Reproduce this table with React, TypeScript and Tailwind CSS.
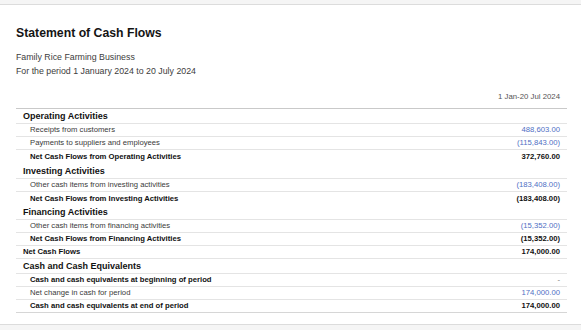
type Line = {
  kind: "section" | "item" | "subtotal" | "total";
  label: string;
  value?: string;
  border?: boolean;
  tall?: boolean;
};

const rows: Line[] = [
  { kind: "section", label: "Operating Activities" },
  { kind: "item", label: "Receipts from customers", value: "488,603.00" },
  { kind: "item", label: "Payments to suppliers and employees", value: "(115,843.00)" },
  { kind: "subtotal", label: "Net Cash Flows from Operating Activities", value: "372,760.00", border: false, tall: true },
  { kind: "section", label: "Investing Activities" },
  { kind: "item", label: "Other cash items from investing activities", value: "(183,408.00)" },
  { kind: "subtotal", label: "Net Cash Flows from Investing Activities", value: "(183,408.00)", border: false },
  { kind: "section", label: "Financing Activities" },
  { kind: "item", label: "Other cash items from financing activities", value: "(15,352.00)" },
  { kind: "subtotal", label: "Net Cash Flows from Financing Activities", value: "(15,352.00)" },
  { kind: "total", label: "Net Cash Flows", value: "174,000.00" },
  { kind: "section", label: "Cash and Cash Equivalents" },
  { kind: "subtotal", label: "Cash and cash equivalents at beginning of period", value: "-" },
  { kind: "item", label: "Net change in cash for period", value: "174,000.00" },
  { kind: "subtotal", label: "Cash and cash equivalents at end of period", value: "174,000.00" },
];

function Row({ row, last }: { row: Line; last: boolean }) {
  const border = row.border !== false;
  const base = `flex items-center justify-between pr-[7px] ${
    border ? (last ? "border-b border-[#d6d6d6]" : "border-b border-[#e4e4e4]") : ""
  }`;

  if (row.kind === "section") {
    return (
      <div className={`${base} h-[15px] pl-[7px]`}>
        <span className="text-[9px] font-bold text-[#111]">{row.label}</span>
      </div>
    );
  }

  const bold = row.kind !== "item";
  return (
    <div className={`${base} ${row.tall ? "h-[14px]" : "h-[13px]"} ${row.kind === "total" ? "pl-[7px]" : "pl-[14px]"}`}>
      <span className={`text-[7.7px] ${bold ? "font-bold text-[#111]" : "text-[#3a3a3a]"}`}>{row.label}</span>
      <span
        className={`text-[7.7px] ${
          bold ? (row.value === "-" ? "text-[#777]" : "font-bold text-[#111]") : "text-[#4f6fc4]"
        }`}
      >
        {row.value}
      </span>
    </div>
  );
}

export default function App() {
  return (
    <div className="h-[330px] w-[581px] overflow-hidden bg-[#f5f5f5] font-['Liberation_Sans',Arial,sans-serif] leading-none">
      <div className="mt-[4px] h-[321px] border-y border-[#dcdcdc] bg-white pl-4 pr-[14px] pt-[20px]">
        <h1 className="h-[16px] text-[12.25px] font-bold leading-[16px] text-[#141414]">Statement of Cash Flows</h1>
        <div className="mt-[9px] text-[8.8px] leading-[14px] text-[#3d3d3d]">
          <p>Family Rice Farming Business</p>
          <p>For the period 1 January 2024 to 20 July 2024</p>
        </div>

        <div className="mt-[12px] flex h-[19px] items-center justify-end border-b border-[#c9c9c9] pb-[4px] pr-[7px]">
          <span className="text-[7.8px] text-[#555]">1 Jan-20 Jul 2024</span>
        </div>

        <div className="flex flex-col">
          {rows.map((row, i) => (
            <Row key={row.label} row={row} last={i === rows.length - 1} />
          ))}
        </div>
      </div>
    </div>
  );
}
